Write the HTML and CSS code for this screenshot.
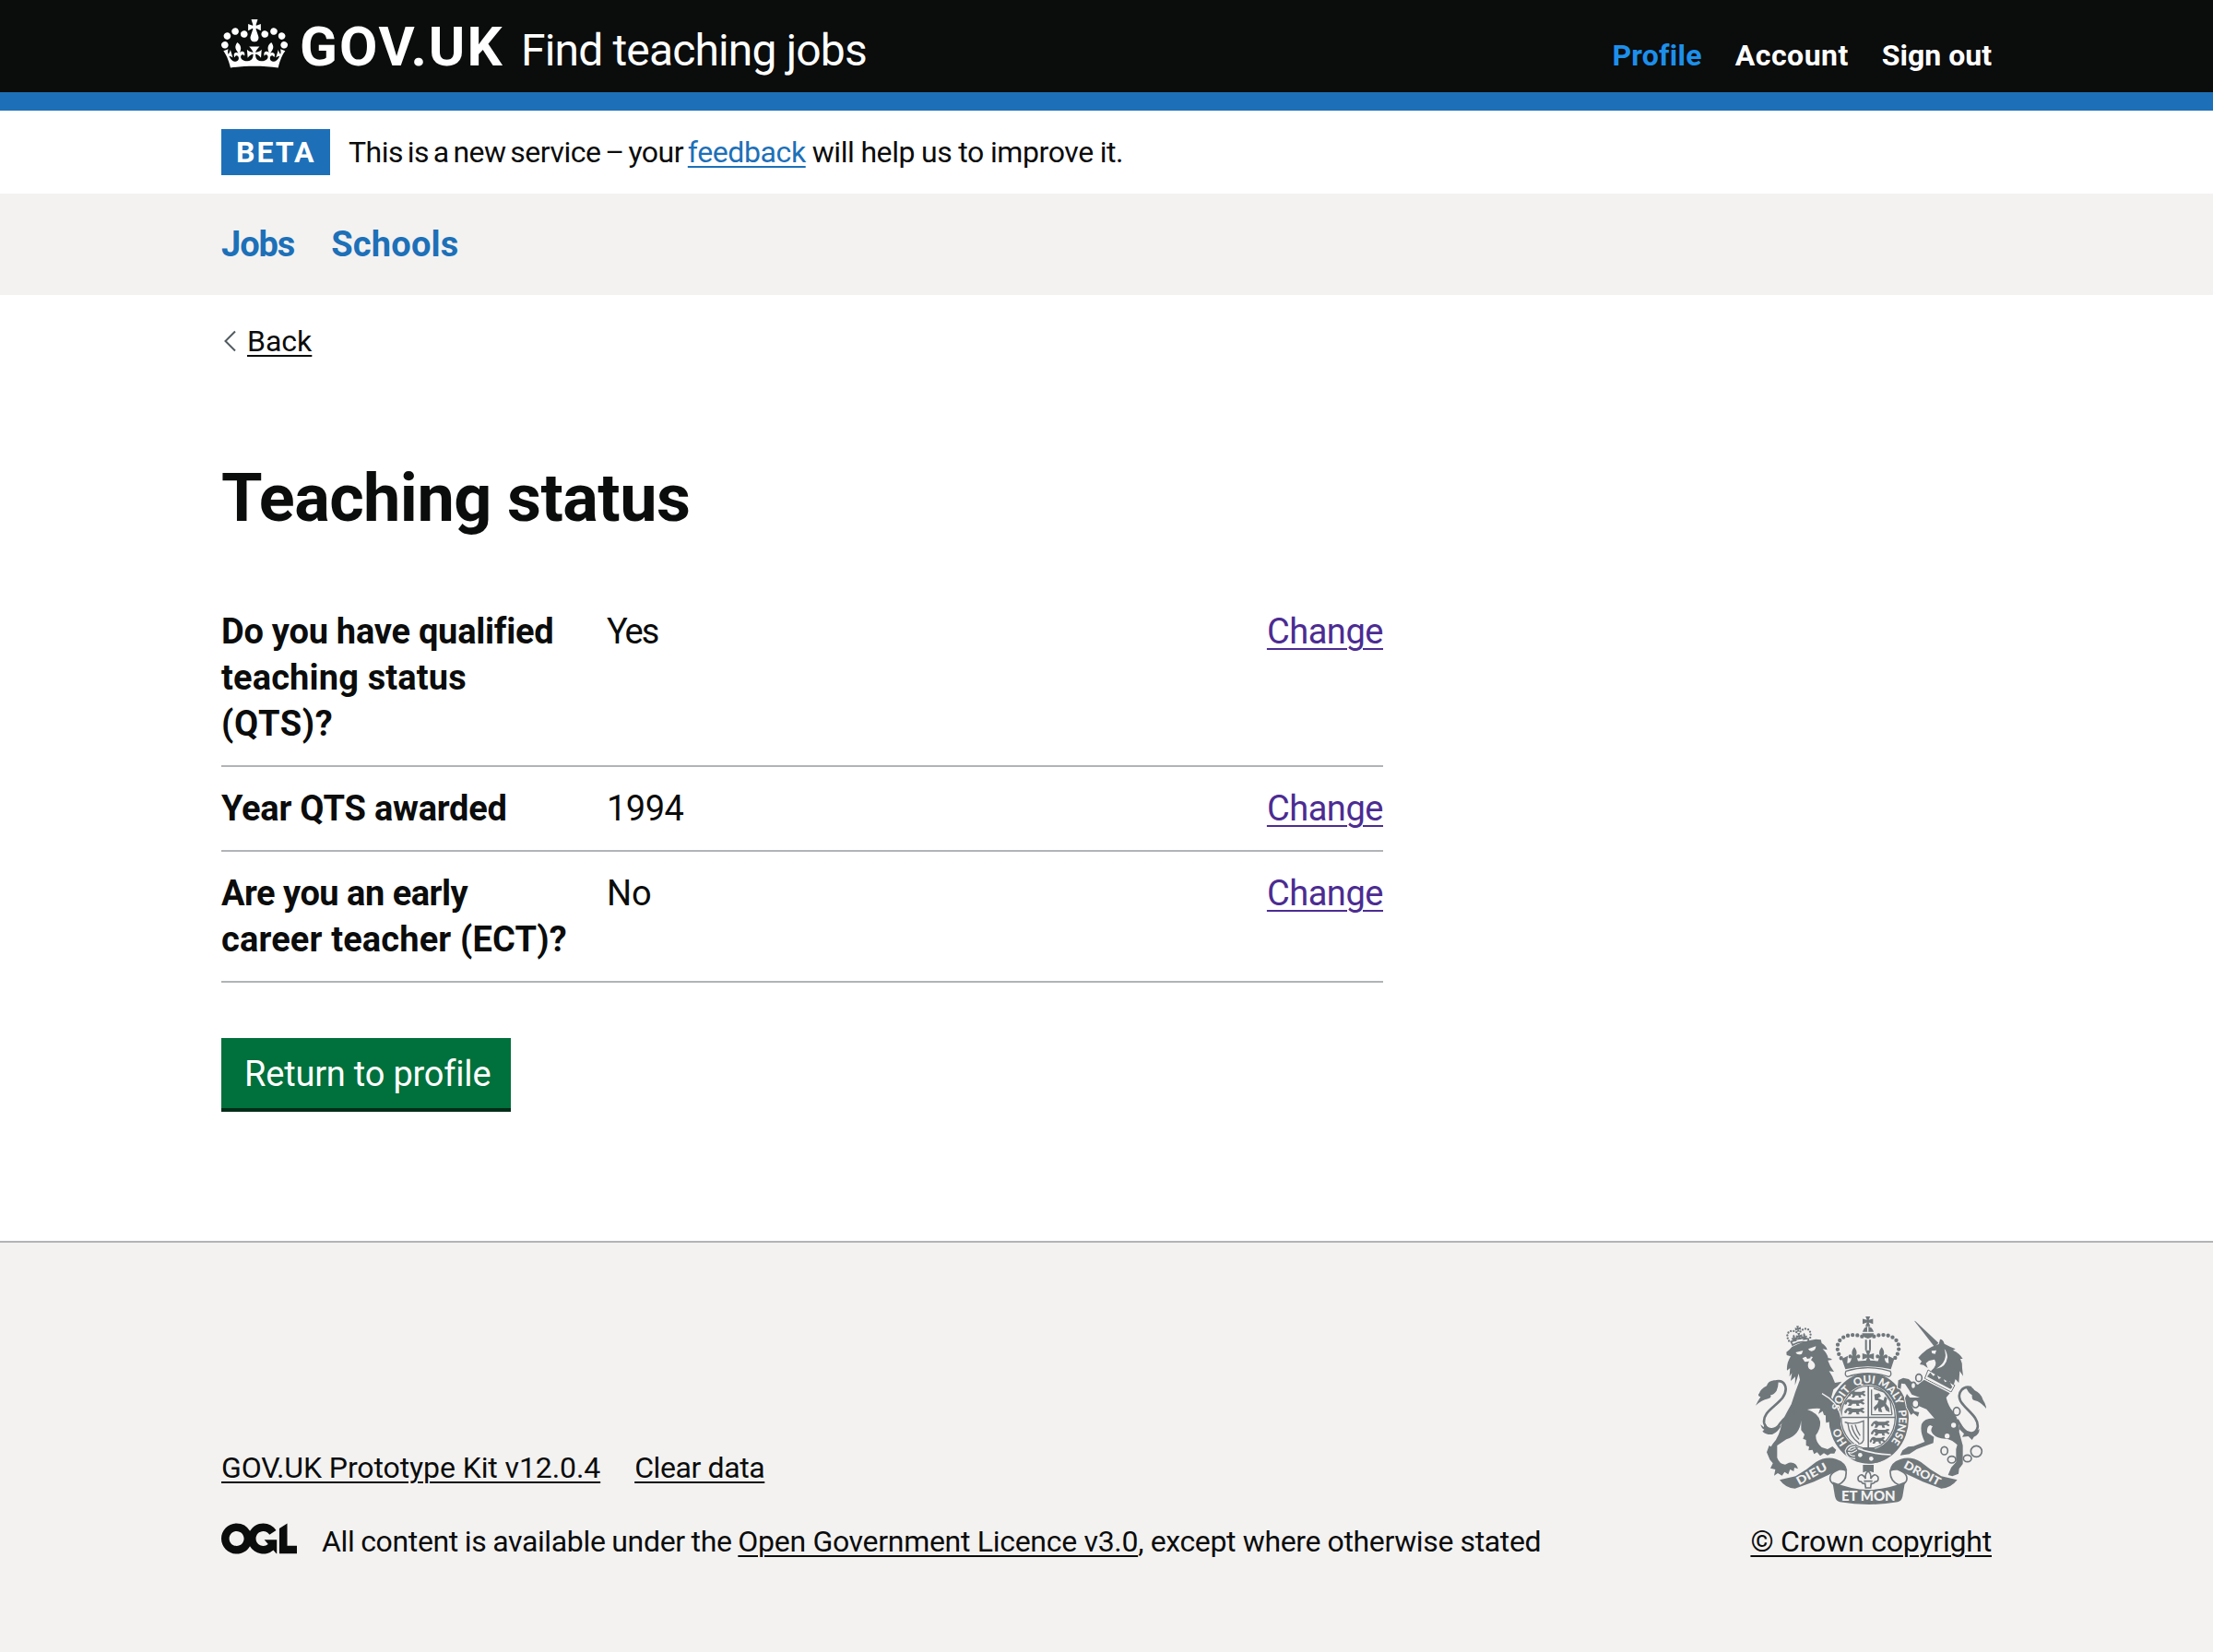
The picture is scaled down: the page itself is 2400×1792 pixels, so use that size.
FILE: index.html
```html
<!DOCTYPE html>
<html lang="en">
<head>
<meta charset="utf-8">
<title>Teaching status</title>
<link rel="stylesheet" href="styles.css">
</head>
<body>
<header class="header">
  <div class="container header-inner">
    <a class="logo" href="#">
      <svg class="logo-crown" viewBox="0 0 132 97" aria-hidden="true"><path fill="currentColor" fill-rule="evenodd" d="M25 30.2c3.5 1.5 7.7-.2 9.1-3.7 1.5-3.6-.2-7.8-3.9-9.2-3.6-1.4-7.6.3-9.1 3.9-1.4 3.5.3 7.5 3.9 9zM9 39.5c3.6 1.5 7.8-.2 9.2-3.7 1.5-3.6-.2-7.8-3.9-9.1-3.6-1.5-7.6.2-9.1 3.8-1.4 3.5.3 7.5 3.8 9zM4.4 57.2c3.5 1.5 7.7-.2 9.1-3.8 1.5-3.6-.2-7.7-3.9-9.1-3.5-1.5-7.6.3-9.1 3.8-1.4 3.5.3 7.6 3.9 9.1zm38.3-21.4c3.5 1.5 7.7-.2 9.1-3.8 1.5-3.6-.2-7.7-3.9-9.1-3.6-1.5-7.6.3-9.1 3.8-1.3 3.6.4 7.7 3.9 9.1zm64.4-5.6c-3.6 1.5-7.8-.2-9.1-3.7-1.5-3.6.2-7.8 3.8-9.2 3.6-1.4 7.7.3 9.2 3.9 1.3 3.5-.4 7.5-3.9 9zm15.9 9.3c-3.6 1.5-7.7-.2-9.1-3.7-1.5-3.6.2-7.8 3.7-9.1 3.6-1.5 7.7.2 9.2 3.8 1.5 3.5-.3 7.5-3.8 9zm4.7 17.7c-3.6 1.5-7.8-.2-9.2-3.8-1.5-3.6.2-7.7 3.9-9.1 3.6-1.5 7.7.3 9.2 3.8 1.3 3.5-.4 7.6-3.9 9.1zM89.3 35.8c-3.6 1.5-7.8-.2-9.2-3.8-1.4-3.6.2-7.7 3.9-9.1 3.6-1.5 7.7.3 9.2 3.8 1.4 3.6-.3 7.7-3.9 9.1zM69.7 17.7l8.9 4.7V9.3l-8.9 2.8c-.2-.3-.5-.6-.9-.9L72.4 0H59.6l3.5 11.2c-.3.3-.6.5-.9.9l-8.8-2.8v13.1l8.8-4.7c.3.3.6.7.9.9l-5 15.4v.1c-.2.8-.4 1.6-.4 2.4 0 4.1 3.1 7.5 7 8.1h.2c.3 0 .7.1 1 .1.4 0 .7 0 1-.1h.2c4-.6 7.1-4.1 7.1-8.1 0-.8-.1-1.7-.4-2.4V34l-5.1-15.4c.4-.2.7-.6 1-.9zM66 92.8c16.9 0 32.8 1.1 47.1 3.2 4-16.9 8.9-26.7 14-33.5l-9.6-3.4c1 4.9 1.1 7.2 0 10.2-1.5-1.4-3-4.3-4.2-8.7L108.6 76c2.8-2 5-3.2 7.5-3.3-4.4 9.4-10 11.9-13.6 11.2-4.3-.8-6.3-4.6-5.6-7.9 1-4.7 5.7-5.9 8-.5 4.3-8.7-3-11.4-7.6-8.8 7.1-7.2 7.9-13.5 2.1-21.1-8 6.1-8.1 12.3-4.5 20.8-4.7-5.4-12.1-2.5-9.5 6.2 3.4-5.2 7.9-2 7.2 3.1-.6 4.3-6.4 7.8-13.5 7.2-10.3-.9-10.9-8-11.2-13.8 2.5-.5 7.1 1.8 11 7.3L80.2 60c-4.1 4.4-8 5.3-12.3 5.4 1.4-4.4 8-11.6 8-11.6H55.5s6.4 7.2 7.9 11.6c-4.2-.1-8-1-12.3-5.4l1.4 16.4c3.9-5.5 8.5-7.7 10.9-7.3-.3 5.8-.9 12.8-11.1 13.8-7.2.6-12.9-2.9-13.5-7.2-.7-5 3.8-8.3 7.1-3.1 2.7-8.7-4.6-11.6-9.4-6.2 3.7-8.5 3.6-14.7-4.6-20.8-5.8 7.6-5 13.9 2.2 21.1-4.7-2.6-11.9.1-7.7 8.8 2.3-5.5 7.1-4.2 8.1.5.7 3.3-1.3 7.1-5.7 7.9-3.5.7-9-1.8-13.5-11.2 2.5.1 4.7 1.3 7.5 3.3l-4.7-15.4c-1.2 4.4-2.7 7.2-4.3 8.7-1.1-3-.9-5.3 0-10.2l-9.5 3.4c5 6.9 9.9 16.7 14 33.5 14.8-2.1 30.8-3.2 47.7-3.2z"/></svg>
      <span class="logo-text">GOV.UK</span>
    </a>
    <a class="service-name" href="#">Find teaching jobs</a>
    <nav class="account-nav">
      <a class="account-link account-link-active" href="#">Profile</a>
      <a class="account-link account-link-wide" href="#">Account</a>
      <a class="account-link" href="#">Sign out</a>
    </nav>
  </div>
</header>
<div class="container phase-banner">
  <strong class="tag">BETA</strong>
  <p class="phase-text"><span class="phase-intro">This is a new service – your </span><a class="link" href="#">feedback</a> will help us to improve it.</p>
</div>
<nav class="primary-nav">
  <div class="container primary-nav-inner">
    <a class="primary-link primary-link-jobs" href="#">Jobs</a>
    <a class="primary-link" href="#">Schools</a>
  </div>
</nav>
<main class="container main">
  <a class="back" href="#">
    <svg class="back-icon" viewBox="0 0 14 24" aria-hidden="true"><path d="M13 1.5 2.5 12 13 22.5" fill="none" stroke="#505a5f" stroke-width="2"/></svg>
    <span class="back-label">Back</span>
  </a>
  <h1 class="heading">Teaching status</h1>
  <dl class="summary">
    <div class="row">
      <dt class="key"><span class="snug">Do you have qualified</span> <span class="loose">teaching status</span> <span class="looser">(QTS)?</span></dt>
      <dd class="value value-yes">Yes</dd>
      <dd class="action"><a class="change" href="#">Change</a></dd>
    </div>
    <div class="row">
      <dt class="key"><span class="snug">Year QTS awarded</span></dt>
      <dd class="value value-year">1994</dd>
      <dd class="action"><a class="change" href="#">Change</a></dd>
    </div>
    <div class="row">
      <dt class="key"><span class="tight">Are you an early</span> <span class="loose">career teacher (ECT)?</span></dt>
      <dd class="value">No</dd>
      <dd class="action"><a class="change" href="#">Change</a></dd>
    </div>
  </dl>
  <a class="button" href="#">Return to profile</a>
</main>
<footer class="footer">
  <div class="container footer-inner">
    <div class="footer-main">
      <div class="footer-links">
        <a class="footer-link footer-kit" href="#">GOV.UK Prototype Kit v12.0.4</a>
        <a class="footer-link footer-clear" href="#">Clear data</a>
      </div>
      <div class="licence">
        <svg class="ogl" viewBox="0 0 483.2 195.7" aria-hidden="true"><path fill="currentColor" d="M421.5 142.8V.1l-50.7 32.3v161.1h112.4v-50.7zm-122.3-9.6A47.12 47.12 0 0 1 221 97.8c0-26 21.1-47.1 47.1-47.1 16.7 0 31.4 8.7 39.7 21.8l42.7-27.2A97.63 97.63 0 0 0 268.1 0c-36.5 0-68.3 20.1-85.1 49.7A98 98 0 0 0 97.8 0C43.9 0 0 43.9 0 97.8s43.9 97.8 97.8 97.8c36.5 0 68.3-20.1 85.1-49.7a97.76 97.76 0 0 0 149.6 25.4l19.4 22.2h3v-87.8h-80l24.3 27.5zM97.8 145c-26 0-47.1-21.1-47.1-47.1s21.1-47.1 47.1-47.1 47.1 21.1 47.1 47.1S123.8 145 97.8 145"/></svg>
        <span class="licence-text"><span class="licence-intro">All content is available under the </span><a class="footer-link licence-link" href="#">Open Government Licence v3.0</a><span class="licence-end">, except where otherwise stated</span></span>
      </div>
    </div>
    <div class="copyright">
      <svg class="crest" viewBox="72 54 750 612" aria-hidden="true">
        <defs>
          <g id="fleur"><path d="M0-28C8-18 10-10 5 2c5-10 16-8 14 2-1 5-7 6-9 2-1 6 2 14 8 18h-36c6-4 9-12 8-18-2 4-8 3-9-2-2-10 9-12 14-2-5-12-3-20 5-30z"/></g>
          <g id="patty"><path d="M-8-18H8L3-5 17-9V9L3 4 8 17H-8L-3 4-17 9V-9L-3-5z"/></g>
          <g id="walker"><path d="M-24-6c6-6 12-4 16-1h20c6-4 12-4 13 1l-6 4 7 6-4 4-8-5-5 2 3 7h-8l-2-7h-9l-5 7h-8l4-9-5-4c-2 4-1 8-5 9s-5-6-2-8z"/></g>
          <path id="garter" d="M440 499A98 114 0 0 1 440 271 98 114 0 0 1 440 499"/>
        </defs>
        <g fill="#6f777b">
          <!-- lion: crown -->
          <g transform="translate(214 122) rotate(-9)">
            <path d="M-32 8Q0-6 32 8L27 25Q0 12-27 25z"/>
            <path d="M-26 12Q0 0 26 12L23 18Q0 8-23 18z" fill="#f3f2f1"/>
            <use href="#patty" transform="translate(0 -28) scale(.55)"/>
            <use href="#patty" transform="translate(0 -3) scale(.6)"/>
            <use href="#fleur" transform="translate(-17 0) scale(.45)"/>
            <use href="#fleur" transform="translate(17 0) scale(.45)"/>
            <path d="M-35 6C-47-24-20-34-2-14M35 6C47-24 20-34 2-14" fill="none" stroke="#6f777b" stroke-width="7" stroke-linecap="round" stroke-dasharray="0 9.5"/>
          </g>
          <!-- lion: head, mane and body -->
          <path d="M172 170 182 162 190 153Q225 134 268 128L284 130 287 141Q301 149 305 163L290 160Q306 176 308 190 316 188 321 195L307 197Q314 218 327 234L311 232Q322 247 330 270L352 266 338 282 325 292 318 318Q336 336 344 356L347 398 338 404 330 393 326 412 314 410 316 396 302 400 300 386 310 380 294 374 290 362 276 371 282 354Q266 352 240 357 276 368 282 396 284 420 268 440 266 462 287 480L306 486 322 477 334 488 328 500 316 500 306 506 294 499 282 508 272 496 262 502 257 488 244 490 246 478 236 474 236 456 226 452 231 438 220 424V392Q216 440 172 454L142 474 142 514Q150 536 168 536L180 530Q204 526 210 550L198 546 196 558 184 552 178 568 166 560 158 572 144 564 132 572 136 552 120 548 128 532 118 520 108 496 116 474 122 478 128 468Q150 446 158 396 176 360 188 340 200 300 216 260L212 240 200 278 201 250 186 264 190 238 182 250 184 222 174 230Q172 206 186 184L173 180z"/>
          <path d="M202 171 226 165 222 176Q208 182 202 171zM243 160 268 151Q268 166 254 167 246 167 243 160zM224 190Q240 180 258 186L252 196Q270 208 264 220 256 232 246 224 238 214 246 200L232 202z" fill="#f3f2f1"/>
          <path d="M234 182 252 178 250 190 240 192z"/>
          <!-- lion: tail -->
          <path d="M132 267C168 256 180 288 160 318 140 346 92 366 100 402 106 424 136 430 152 402 166 382 184 372 206 364" fill="none" stroke="#6f777b" stroke-width="8"/>
          <path d="M72 344Q80 328 88 316 76 312 84 304 88 290 108 280 112 264 132 262L146 268Q146 282 140 296 132 308 120 310 126 318 112 322 92 326 72 344zM88 406Q92 420 100 422L94 428Q106 440 126 438 146 430 156 408L138 418Q112 426 104 402L98 414z"/>
          <!-- royal crown -->
          <use href="#patty" transform="translate(437 70) scale(1 .95)"/>
          <path d="M420 104Q424 88 437 86 452 88 456 104z"/>
          <path d="M418 109H457Q454 124 437 126 422 124 418 109z"/>
          <path d="M435 88H439V104H435z" fill="#f3f2f1"/>
          <path d="M428 130H434V164H428zM441 130H447V164H441z"/>
          <path d="M418 119C380 106 336 120 338 158 340 176 348 188 358 200M457 119C495 106 540 120 538 158 536 176 528 188 516 200" fill="none" stroke="#6f777b" stroke-width="13" stroke-linecap="round" stroke-dasharray="0 15.5"/>
          <path d="M352 192 372 182 370 206Q437 188 505 206L503 182 523 192 512 226Q437 208 364 226z"/>
          <use href="#fleur" transform="translate(393 182)"/>
          <use href="#fleur" transform="translate(482 182)"/>
          <use href="#patty" transform="translate(438 184) scale(1.1)"/>
          <!-- garter -->
          <path fill-rule="evenodd" stroke="#f3f2f1" stroke-width="8" paint-order="stroke" d="M440 237A130 148 0 0 1 440 533 130 148 0 0 1 440 237zM438 276A92 106 0 0 0 438 488 92 106 0 0 0 438 276z"/>
          <path d="M366 232Q437 210 510 232 516 246 506 250 437 228 370 250 360 246 366 232z" fill="#f3f2f1" stroke="#6f777b" stroke-width="4"/>
          <ellipse cx="438" cy="382" rx="88" ry="102" fill="none" stroke="#6f777b" stroke-width="4"/>
          <!-- shield quarters -->
          <path d="M436 280H441V486H436zM350 380H527V385H350zM422 480H456L464 490H416z"/>
          <use href="#walker" transform="translate(404 306)"/>
          <use href="#walker" transform="translate(396 333) scale(1.2 1)"/>
          <use href="#walker" transform="translate(396 361) scale(1.2 1)"/>
          <path d="M449 376V292M449 374H516M456 288 490 300 510 330 516 374" fill="none" stroke="#6f777b" stroke-width="4"/>
          <path d="M458 308 474 304 480 314 470 320 488 328 492 314 500 320 496 338 506 352 508 366 496 360 490 346 480 352 484 366 472 364 470 350 460 362 456 350 468 338 472 328 460 326z"/>
          <use href="#walker" transform="translate(480 404) scale(1.1 1)"/>
          <use href="#walker" transform="translate(480 430) scale(1.1 1)"/>
          <use href="#walker" transform="translate(470 456) scale(.9 1)"/>
          <path d="M362 398Q392 408 423 394V456Q418 470 406 468 M362 398 372 402Q376 444 408 466M384 408Q390 434 408 454M396 406Q400 424 412 442" fill="none" stroke="#6f777b" stroke-width="4"/>
          <!-- lion: fore paw over the garter -->
          <path d="M290 300 318 318Q336 336 344 356L349 398 340 408 331 394 327 412 314 410 316 396 302 400 300 386 300 340z" />
          <path d="M288 305Q312 318 328 336 342 352 351 382" fill="none" stroke="#f3f2f1" stroke-width="4"/>
          <!-- belt buckle and studs -->
          <path d="M376 468 396 474 404 488 500 512 508 506Q470 540 430 530 388 522 366 496z"/>
          <path d="M462 494 494 482 514 500 500 508z"/>
          <path d="M404 484Q450 502 512 504" fill="none" stroke="#f3f2f1" stroke-width="5"/>
          <path d="M396 474Q374 474 368 492 372 514 396 512M368 492 384 494 400 486" fill="none" stroke="#f3f2f1" stroke-width="12"/>
          <path d="M396 474Q374 474 368 492 372 514 396 512M368 492 384 494 400 486" fill="none" stroke="#6f777b" stroke-width="5"/>
          <circle cx="412" cy="505" r="7" fill="#f3f2f1"/>
          <circle cx="448" cy="517" r="7" fill="#f3f2f1"/>
          <g class="crest-text" fill="#f3f2f1" font-size="35">
            <text><textPath href="#garter" startOffset="80">HO</textPath></text>
            <text><textPath href="#garter" startOffset="190">SOIT</textPath></text>
            <text><textPath href="#garter" startOffset="287">QUI</textPath></text>
            <text><textPath href="#garter" startOffset="362">MAL</textPath></text>
            <text><textPath href="#garter" startOffset="434">Y</textPath></text>
            <text><textPath href="#garter" startOffset="474">PENSE</textPath></text>
          </g>
          <!-- unicorn: horn, head and mane -->
          <path d="M588 68 592 70 667 140 654 153z"/>
          <path d="M601 188 612 176Q628 160 646 152L668 144 672 128Q682 128 686 143L704 152 722 160 714 164Q736 174 746 192L738 192Q746 208 744 222L747 248 736 232 733 270 722 258 714 284 704 266 690 262 676 252 664 246 652 244 642 232Q666 212 654 194L636 198 626 206 632 222 618 212 606 210 612 200z"/>
          <path d="M644 166 660 164 656 176 646 174zM686 160Q700 200 660 224 692 220 696 186 694 168 686 160z" fill="#f3f2f1"/>
          <path d="M633 228 720 278 708 300 622 256z" fill="#f3f2f1" stroke="#6f777b" stroke-width="3"/>
          <path d="M640 236 650 248 660 240 668 258 680 250 688 268 700 262 712 284 706 290 630 250z"/>
          <!-- unicorn: body and legs -->
          <path stroke="#f3f2f1" stroke-width="6" paint-order="stroke" d="M620 260 704 304 692 318Q698 346 716 366 738 398 734 430L746 474 746 534 734 550 732 566 712 574 698 570 708 546 724 528 724 486 728 472Q712 456 694 452 664 454 648 436 638 424 648 412L640 408Q628 412 630 432L652 446 650 466 596 486 572 502 542 506 550 490 568 478 586 476 622 462Q606 430 612 404 622 384 654 386L628 356 600 344 580 346 588 362 604 366 600 380 584 368 578 374 564 350 558 320 564 306 574 318 606 318 580 308 570 292 558 274 546 272 544 290 534 286 536 262 552 254 570 258 580 268 600 276z"/>
          <g fill="#f3f2f1"><circle cx="716" cy="408" r="8"/><circle cx="695" cy="443" r="8"/></g>
          <path d="M566 344 580 372" stroke="#6f777b" stroke-width="8"/>
          <!-- chain -->
          <g fill="none" stroke="#6f777b" stroke-width="5">
            <ellipse cx="603" cy="254" rx="10" ry="12"/><ellipse cx="585" cy="279" rx="8" ry="11" fill="#f3f2f1"/>
            <ellipse cx="592" cy="338" rx="11" ry="13" fill="#f3f2f1"/><ellipse cx="726" cy="363" rx="11" ry="13" fill="#f3f2f1"/>
            <ellipse cx="686" cy="491" rx="11" ry="13"/><ellipse cx="710" cy="520" rx="13" ry="11"/>
            <ellipse cx="761" cy="516" rx="13" ry="11"/><circle cx="790" cy="493" r="18"/>
          </g>
          <!-- unicorn: tail -->
          <path d="M774 286C748 278 726 300 738 328 752 356 800 380 794 416 788 440 764 436 748 424L728 390" fill="none" stroke="#6f777b" stroke-width="8"/>
          <path d="M756 283Q774 278 784 294 806 304 812 326 822 340 822 354 804 332 786 328 774 326 776 310 762 302 756 283zM734 420 750 436 744 446 764 444 776 456 782 446Q800 440 800 420L782 434Q760 436 736 398z"/>
          <!-- fleur-de-lis pendant -->
          <path d="M421 537H456V562Q438 552 421 562z"/>
          <path d="M438 556Q450 568 446 582 458 560 470 576 474 592 460 592 456 600 448 598L446 612H430L428 598Q420 600 416 592 402 592 406 576 418 560 430 582 426 568 438 556z" fill="#f3f2f1" stroke="#6f777b" stroke-width="5"/>
          <path d="M424 590H452" stroke="#6f777b" stroke-width="5"/>
          <!-- motto ribbon -->
          <path d="M150 586 202 574Q240 552 268 528 300 508 334 518 366 528 370 556 344 546 326 562L262 592 200 614Q170 614 150 586z"/>
          <path d="M728 586 676 574Q638 552 610 528 578 508 544 518 512 528 508 556 534 546 552 562L616 592 676 614Q706 614 728 586z"/>
          <path d="M344 552Q306 566 316 590 326 606 340 602 370 590 366 556 356 550 344 552zM534 552Q572 566 562 590 552 606 538 602 508 590 510 556 522 550 534 552z" fill="#f3f2f1" stroke="#6f777b" stroke-width="5"/>
          <path d="M322 592Q440 644 558 592L550 640Q546 656 534 658 440 674 346 658 334 656 330 640z"/>
          <g class="crest-text" fill="#f3f2f1">
            <text font-size="37" transform="translate(213 604) rotate(-29)" textLength="108" lengthAdjust="spacingAndGlyphs">DIEU</text>
            <text font-size="37" transform="translate(551 545) rotate(28)" textLength="130" lengthAdjust="spacingAndGlyphs">DROIT</text>
            <text font-size="45" x="351" y="655" textLength="176" lengthAdjust="spacingAndGlyphs">ET MON</text>
          </g>
        </g>
      </svg>
      <a class="footer-link crown-link" href="#">© Crown copyright</a>
    </div>
  </div>
</footer>
</body>
</html>
```
FILE: styles.css
```css
* {
  box-sizing: border-box;
}

body {
  margin: 0;
  background: #fff;
  color: #0b0c0c;
  font-family: Roboto, "Liberation Sans", sans-serif;
  font-size: 32px;
  line-height: 40px;
}

a {
  color: inherit;
  text-decoration: none;
}

.container {
  width: 1920px;
  margin: 0 auto;
}

.header {
  height: 120px;
  background: #0b0c0c;
  border-bottom: 20px solid #1d70b8;
  color: #fff;
}

.header-inner {
  display: flex;
  align-items: flex-start;
}

.logo {
  display: flex;
  gap: 13px;
  padding-top: 21px;
}

.logo-crown {
  width: 72px;
  height: 53px;
}

.logo-text {
  width: 219px;
  font-size: 60px;
  font-weight: 700;
  letter-spacing: 2px;
  line-height: 59px;
  white-space: nowrap;
}

.service-name {
  padding: 30px 0 0 21px;
  font-size: 48px;
  letter-spacing: -0.85px;
  line-height: 50px;
  white-space: nowrap;
}

.account-nav {
  display: flex;
  gap: 36px;
  margin-left: auto;
  padding-top: 40px;
  font-weight: 700;
}

.account-link-active {
  color: #1d8feb;
  letter-spacing: 0.25px;
}

.account-link-wide {
  letter-spacing: 0.5px;
}

.phase-banner {
  display: flex;
  gap: 20px;
  padding: 20px 0;
  line-height: 50px;
}

.tag {
  width: 118px;
  height: 50px;
  padding-left: 16px;
  background: #1d70b8;
  color: #fff;
  letter-spacing: 2px;
}

.phase-text {
  margin: 0;
  letter-spacing: -0.4px;
  word-spacing: -0.6px;
}

.phase-intro {
  letter-spacing: -0.5px;
  word-spacing: -2.7px;
}

.link {
  color: #1d70b8;
}

.link,
.back-label,
.footer-link {
  text-decoration: underline;
  text-decoration-thickness: 2px;
  text-underline-offset: 4px;
}

.primary-nav {
  padding: 30px 0;
  background: #f3f2f1;
  color: #1d70b8;
  font-size: 38px;
  font-weight: 700;
  line-height: 50px;
}

.primary-nav-inner {
  display: flex;
  gap: 40px;
}

.primary-link {
  letter-spacing: 0.2px;
}

.primary-link-jobs {
  letter-spacing: -1.1px;
}

.main {
  height: 1026px;
  padding-top: 30px;
}

.back {
  display: flex;
  gap: 12px;
  padding-left: 2px;
}

.back-icon {
  width: 14px;
  height: 24px;
  margin-top: 8px;
}

.heading {
  margin: 113px 0 62px;
  font-size: 72px;
  font-weight: 700;
  letter-spacing: -0.55px;
  line-height: 75px;
}

.summary {
  width: 1260px;
  margin: 0 0 60px;
  font-size: 38px;
  line-height: 50px;
}

.row {
  display: grid;
  grid-template-columns: 418px 1fr auto;
  padding: 20px 0;
  border-bottom: 2px solid #b1b4b6;
}

.key {
  padding-right: 38px;
  font-weight: 700;
}

.key span {
  display: block;
  white-space: nowrap;
}

.snug {
  letter-spacing: -0.25px;
}

.tight {
  letter-spacing: -0.5px;
}

.loose {
  letter-spacing: 0.15px;
}

.looser {
  letter-spacing: 0.6px;
}

.value,
.action {
  margin: 0;
}

.value-yes {
  letter-spacing: -2px;
}

.value-year {
  letter-spacing: -0.5px;
}

.change {
  color: #4c2c92;
  letter-spacing: -0.45px;
  text-decoration: underline;
  text-decoration-thickness: 2px;
  text-underline-offset: 5px;
}

.button {
  display: block;
  width: 314px;
  height: 76px;
  padding: 14px 0 0 25px;
  background: #00703c;
  box-shadow: 0 4px 0 #002d18;
  color: #fff;
  font-size: 38px;
  letter-spacing: -0.2px;
  line-height: 50px;
  white-space: nowrap;
}

.footer {
  padding: 80px 0 100px;
  background: #f3f2f1;
  border-top: 2px solid #b1b4b6;
}

.footer-inner {
  display: flex;
  align-items: flex-end;
  justify-content: space-between;
}

.footer-main {
  display: grid;
  gap: 40px;
}

.footer-links {
  display: flex;
  gap: 37px;
}

.footer-kit {
  letter-spacing: -0.1px;
}

.footer-clear {
  letter-spacing: -0.4px;
}

.licence {
  display: flex;
  gap: 27px;
}

.ogl {
  width: 82px;
  height: 34px;
}

.licence-text {
  white-space: nowrap;
}

.licence-intro {
  letter-spacing: -0.35px;
  word-spacing: -0.8px;
}

.licence-link {
  letter-spacing: -0.3px;
}

.licence-end {
  letter-spacing: -0.37px;
}

.copyright {
  display: grid;
  gap: 20px;
  justify-items: end;
}

.crown-link {
  letter-spacing: -0.2px;
}

.crest {
  width: 250px;
  height: 204px;
  margin-right: 6px;
}

.crest-text {
  font-family: Lato, sans-serif;
  font-weight: 900;
}
```
